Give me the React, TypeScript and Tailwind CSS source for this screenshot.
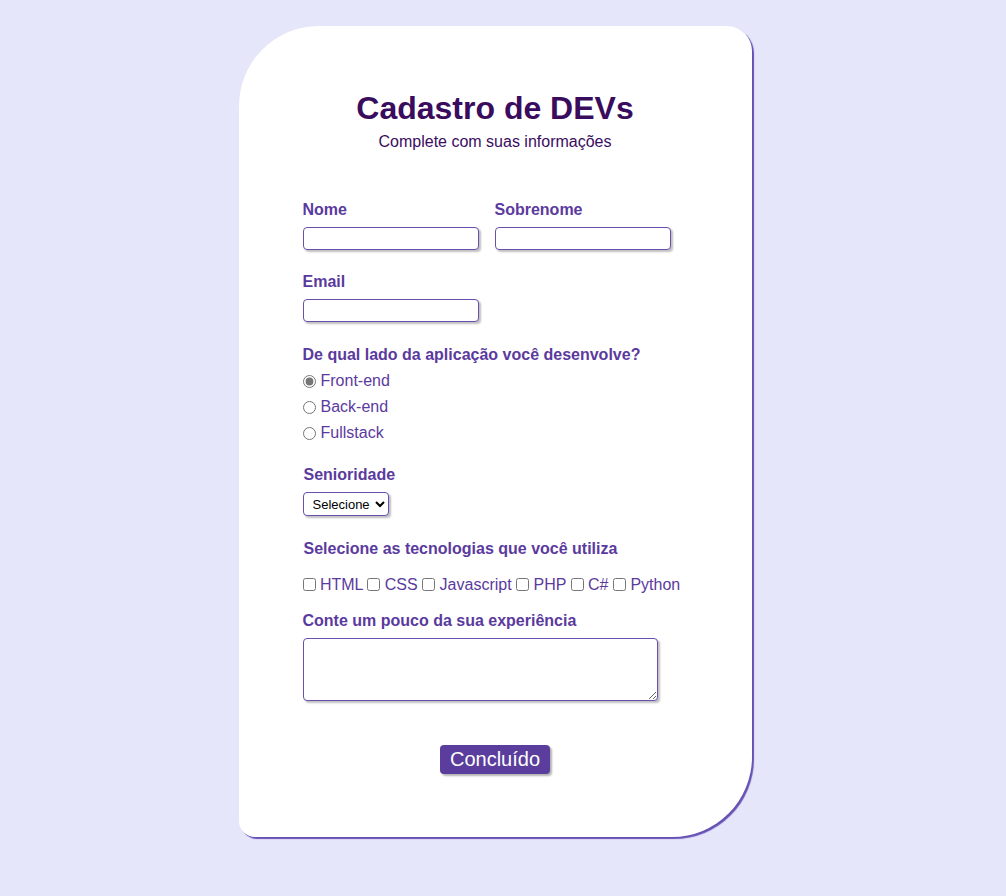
import React from "react";

const labelClass = "block text-base font-bold leading-[18px] text-[#5b3a9e]";
const inputClass =
    "block h-[23px] w-[176px] rounded-[4px] border border-[#6a4fb0] bg-white shadow-[2px_2px_2px_rgba(0,0,0,0.25)] outline-none";

const App = () => {
    return (
        <div className="min-h-[896px] w-full bg-[#e6e6fa] pr-[16px] pt-[26px] font-['Liberation_Sans',Arial,sans-serif]">
            <div className="mx-auto w-[513px] rounded-tl-[80px] rounded-tr-[25px] rounded-br-[80px] rounded-bl-[16px] bg-white px-16 pb-[63px] pt-16 shadow-[2px_2px_1px_#6650b4]">
                {/* Header */}
                <div className="text-center">
                    <h1 className="text-[32px] font-bold leading-[37px] text-[#3a0c5e]">Cadastro de DEVs</h1>
                    <p className="mt-[6px] text-base leading-[18px] text-[#3a0c5e]">Complete com suas informações</p>
                </div>

                <form className="mt-[50px]" onSubmit={(e) => e.preventDefault()}>
                    <div className="flex gap-[16px]">
                        <div>
                            <label className={labelClass}>Nome</label>
                            <input type="text" className={`mt-[8px] ${inputClass}`} />
                        </div>
                        <div>
                            <label className={labelClass}>Sobrenome</label>
                            <input type="text" className={`mt-[8px] ${inputClass}`} />
                        </div>
                    </div>

                    <div className="mt-[23px]">
                        <label className={labelClass}>Email</label>
                        <input type="email" className={`mt-[8px] ${inputClass}`} />
                    </div>

                    <div className="mt-[24px]">
                        <p className={labelClass}>De qual lado da aplicação você desenvolve?</p>
                        <div className="mt-[4px] text-base text-[#5b3a9e]">
                            {["Front-end", "Back-end", "Fullstack"].map((side, index) => (
                                <label key={side} className="flex h-[26px] items-center gap-[5px]">
                                    <input
                                        type="radio"
                                        name="lado"
                                        defaultChecked={index === 0}
                                        className="h-[13px] w-[13px] accent-[#767676]"
                                    />
                                    {side}
                                </label>
                            ))}
                        </div>
                    </div>

                    <div className="mt-[20px]">
                        <label className={`${labelClass} pl-px`}>Senioridade</label>
                        <select className="mt-[8px] h-[24px] rounded-[4px] border border-[#6a4fb0] bg-white pl-[5px] pr-[1px] text-[13px] text-black shadow-[2px_2px_2px_rgba(0,0,0,0.25)]">
                            <option>Selecione</option>
                            <option>Júnior</option>
                            <option>Pleno</option>
                            <option>Sênior</option>
                        </select>
                    </div>

                    <div className="mt-[24px]">
                        <p className={`${labelClass} pl-px`}>Selecione as tecnologias que você utiliza</p>
                        <div className="mt-[18px] text-base leading-[18px] text-[#5b3a9e]">
                            <input type="checkbox" className="h-[13px] w-[13px] align-[-1px]" /> HTML{" "}
                            <input type="checkbox" className="h-[13px] w-[13px] align-[-1px]" /> CSS{" "}
                            <input type="checkbox" className="h-[13px] w-[13px] align-[-1px]" /> Javascript{" "}
                            <input type="checkbox" className="h-[13px] w-[13px] align-[-1px]" /> PHP{" "}
                            <input type="checkbox" className="h-[13px] w-[13px] align-[-1px]" /> C#{" "}
                            <input type="checkbox" className="h-[13px] w-[13px] align-[-1px]" /> Python
                        </div>
                    </div>

                    <div className="mt-[18px]">
                        <label className={labelClass}>Conte um pouco da sua experiência</label>
                        <textarea className="mt-[8px] block h-[63px] w-[355px] rounded-[4px] border border-[#6a4fb0] bg-white shadow-[2px_2px_2px_rgba(0,0,0,0.25)] outline-none" />
                    </div>

                    <div className="mt-[44px] flex justify-center">
                        <button
                            type="submit"
                            className="h-[29px] rounded-[4px] bg-[#5a3d9c] px-[9.5px] text-[20px] leading-[23px] text-white shadow-[2px_2px_2px_rgba(0,0,0,0.3)]"
                        >
                            Concluído
                        </button>
                    </div>
                </form>
            </div>
        </div>
    );
};

export default App;
